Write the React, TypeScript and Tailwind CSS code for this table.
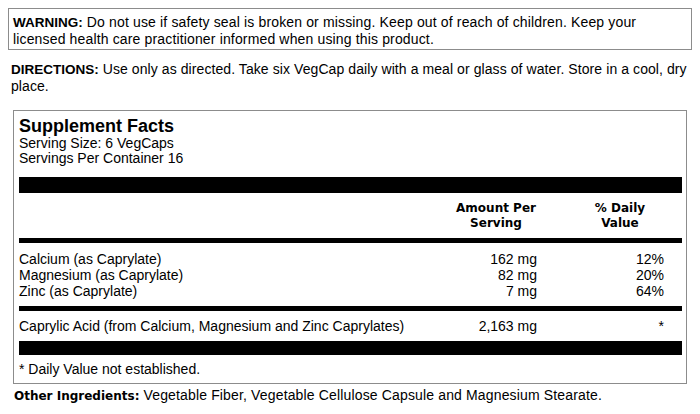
import React from "react";

const arial = { fontFamily: '"Liberation Sans", Arial, sans-serif' };
const verdana = { fontFamily: '"DejaVu Sans", Verdana, sans-serif' };

function Row({ name, amt, dv }: { name: string; amt: string; dv: string }) {
  return (
    <div className="flex h-[16px] items-center leading-[16px]">
      <div className="flex-1 whitespace-nowrap">{name}</div>
      <div className="w-[82px] text-right whitespace-nowrap">{amt}</div>
      <div className="ml-[39px] w-[88px] text-right">{dv}</div>
      <div className="w-[18px]" />
    </div>
  );
}

export default function App() {
  return (
    <div
      className="w-[700px] h-[414px] bg-white text-black text-[14px] overflow-hidden"
      style={arial}
    >
      <div className="mt-[8px] ml-[8px] mr-[8px] border border-[#8c8c8c] pl-[4px] pr-[2px] pt-[5px] pb-[2px] leading-[16px] whitespace-nowrap tracking-[0.15px]">
        <b className="text-[13.5px] tracking-normal">WARNING:</b> Do not use if safety seal is broken or missing. Keep out of reach of children. Keep your
        <br />
        licensed health care practitioner informed when using this product.
      </div>

      <div className="mt-[11px] ml-[11px] leading-[16px] whitespace-nowrap tracking-[0.08px]">
        <b className="text-[13.5px] tracking-normal">DIRECTIONS:</b> Use only as directed. Take six VegCap daily with a meal or glass of water. Store in a cool, dry
        <br />
        place.
      </div>

      <div className="mt-[16px] ml-[13px] mr-[13px] border border-[#8c8c8c] pl-[5px] pr-[4px] pt-[6px] pb-[6px]">
        <div className="text-[18px] font-bold leading-[19px]">Supplement Facts</div>
        <div className="leading-[15px]">Serving Size: 6 VegCaps</div>
        <div className="leading-[15px]">Servings Per Container 16</div>
        <div className="mt-[11px] h-[16px] bg-black" />
        <div className="mt-[8px] flex text-[12px] font-bold leading-[15px]" style={verdana}>
          <div className="flex-1" />
          <div className="w-[82px] text-center whitespace-nowrap">
            Amount Per
            <br />
            Serving
          </div>
          <div className="ml-[39px] w-[88px] text-center">
            % Daily
            <br />
            Value
          </div>
          <div className="w-[18px]" />
        </div>
        <div className="mt-[7px] h-[5px] bg-black" />
        <div className="mt-[8px]">
          <Row name="Calcium (as Caprylate)" amt="162 mg" dv="12%" />
          <Row name="Magnesium (as Caprylate)" amt="82 mg" dv="20%" />
          <Row name="Zinc (as Caprylate)" amt="7 mg" dv="64%" />
        </div>
        <div className="mt-[7px] h-[5px] bg-black" />
        <div className="mt-[7px]">
          <Row name="Caprylic Acid (from Calcium, Magnesium and Zinc Caprylates)" amt="2,163 mg" dv="*" />
        </div>
        <div className="mt-[7px] h-[14px] bg-black" />
        <div className="mt-[6px] leading-[16px]">* Daily Value not established.</div>
      </div>

      <div className="mt-[3px] ml-[14px] leading-[16px] whitespace-nowrap tracking-[0.15px]">
        <b className="text-[12px] tracking-normal" style={verdana}>
          Other Ingredients:
        </b>{" "}
        Vegetable Fiber, Vegetable Cellulose Capsule and Magnesium Stearate.
      </div>
    </div>
  );
}
